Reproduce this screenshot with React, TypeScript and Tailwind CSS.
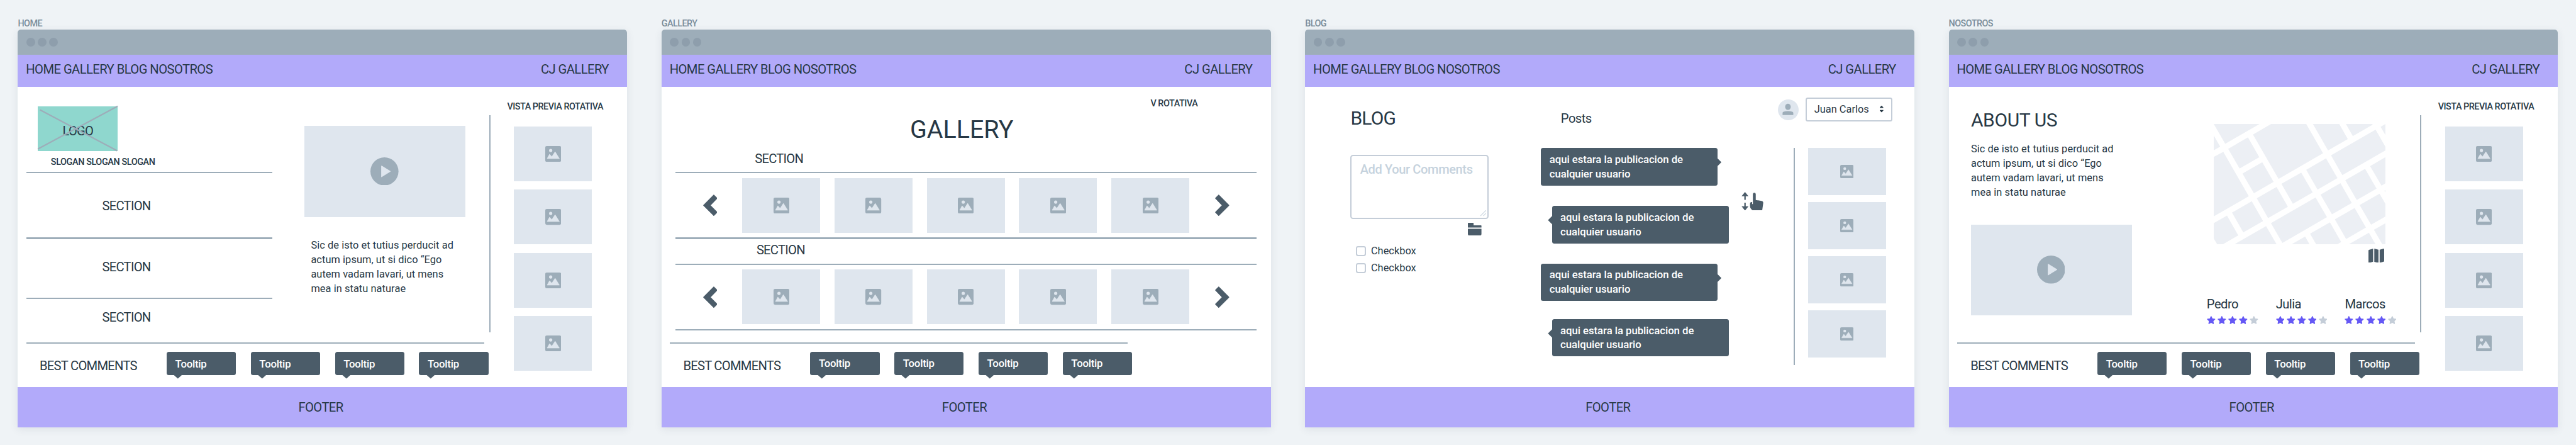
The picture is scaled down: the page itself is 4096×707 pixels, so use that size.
import type { ReactNode } from "react";

const BASE = "font-['Roboto',sans-serif] text-[20.2px] leading-[24px] whitespace-nowrap";
const CAPS = `${BASE} tracking-[-0.56px]`;
const WIDE = `${BASE} tracking-[-0.74px]`;
const SMALL = "font-['Roboto',sans-serif] text-[14.4px] leading-[16px] font-medium whitespace-nowrap";
const LEAD = "font-['Roboto',sans-serif] text-[30px] leading-[36px] whitespace-nowrap";

/* ---------- icons ---------- */

function PictureIcon({ className }: { className: string }) {
  return (
    <svg viewBox="0 0 111 111" className={className}>
      <rect width="111" height="111" rx="11" fill="#9dadb9" />
      <circle cx="38" cy="31" r="11.5" fill="#dfe6ee" />
      <path d="M13 88 30 57 46 75 69 40 99 88Z" fill="#dfe6ee" stroke="#dfe6ee" strokeWidth="3" strokeLinejoin="round" />
    </svg>
  );
}

function ChevronIcon({ flip }: { flip?: boolean }) {
  return (
    <svg viewBox="0 0 40 60" className={flip ? "h-[34.3px] w-[22.8px] -scale-x-100" : "h-[34.3px] w-[22.8px]"}>
      <path d="M1.5 30 29.8 1.5 38.5 10.5 19.5 30 38.5 49.5 29.8 58.5Z" fill="#4b5c69" stroke="#4b5c69" strokeWidth="2.4" strokeLinejoin="round" />
    </svg>
  );
}

function FolderIcon() {
  return (
    <svg viewBox="0 0 114 107" className="h-[20.3px] w-[21.6px]" fill="#4b5c69">
      <path d="M0 39V4a4 4 0 0 1 4-4h40a4 4 0 0 1 4 4v17h62a4 4 0 0 1 4 4v14Z" />
      <path d="M0 50h114v43a14 14 0 0 1-14 14H14A14 14 0 0 1 0 93Z" />
    </svg>
  );
}

function SwipeIcon() {
  return (
    <svg viewBox="0 0 183 156" className="h-[29.6px] w-[34.7px]" fill="#4b5c69">
      <path d="M30 0 59 35H36v31H24V35H1ZM30 156 59 120H36V90H24v30H1Z" />
      <path d="M96 18a12 12 0 0 1 24 0v49l50 8q14 3 13 16l-9 65H96Q72 138 72 118V98q0-14 13-14h5v18h6Z" />
    </svg>
  );
}

function MapIcon() {
  return (
    <svg viewBox="0 0 132 120" className="h-[22.7px] w-[25px]" fill="#4b5c69">
      <path d="M4 10 39 0v110L6 120q-6 0-6-4V16q0-4 4-6Z" />
      <path d="M49 0 84 9v111l-35-9Z" />
      <path d="M94 9 127 0q5 0 5 4v101q0 4-4 5l-34 9Z" />
    </svg>
  );
}

function StarIcon({ on }: { on: boolean }) {
  return (
    <svg viewBox="0 0 24 23" className="h-[13.1px] w-[13.7px]">
      <path
        d="M12 1.2 15.2 7.8 22.6 8.8 17.2 14 18.5 21.4 12 17.9 5.5 21.4 6.8 14 1.4 8.8 8.8 7.8Z"
        fill={on ? "#6558f5" : "#c4cdd8"}
        stroke={on ? "#6558f5" : "#c4cdd8"}
        strokeWidth="2"
        strokeLinejoin="round"
      />
    </svg>
  );
}

const BLOCKS = [
  "36,48 420,48 132,214",
  "36,144 90,238 36,268",
  "36,324 116,281 330,654 36,823",
  "157,256 323,160 418,326 253,422",
  "277,463 443,368 538,534 373,629",
  "365,136 517,48 812,48 953,293 580,509",
  "868,48 1089,48 1161,174 995,269",
  "1145,48 1368,48 1368,54 1203,150",
  "1436,72 1476,48 1476,140",
  "1020,311 1394,96 1476,238 1476,270 1115,477",
  "1348,401 1476,326 1476,546 1444,565",
  "812,432 978,336 1074,502 907,598",
  "604,550 770,456 866,622 700,717",
  "1140,519 1306,424 1402,590 1236,685",
  "1467,607 1476,602 1476,622",
  "397,671 563,576 658,742 492,837",
  "932,640 1099,544 1194,710 1028,805",
  "1260,727 1427,632 1476,717 1476,824 1356,892",
  "189,791 355,696 450,862 284,957",
  "36,879 147,816 242,982 114,1056 64,1056 36,1008",
  "516,879 890,664 986,829 612,1045",
  "1052,847 1218,752 1313,916 1147,1013",
  "1380,935 1476,880 1476,1056 1450,1056",
  "211,1056 475,904 563,1056",
  "844,967 1011,872 1105,1037 1075,1056 895,1056",
  "690,1056 803,992 839,1056",
  "1170,1056 1338,960 1393,1056",
];

function StreetMap() {
  return (
    <svg viewBox="36 48 1440 1008" className="h-[191px] w-[272.9px]" fill="#eceff4">
      {BLOCKS.map((b) => (
        <polygon key={b} points={b} />
      ))}
    </svg>
  );
}

/* ---------- shared parts ---------- */

function Rule({ className }: { className: string }) {
  return <div className={`h-[2.3px] shrink-0 bg-[#9dadb9] ${className}`} />;
}

function Screen({ name, children }: { name: string; children: ReactNode }) {
  return (
    <section className="w-[968.8px] shrink-0">
      <div className={`h-[16.5px] tracking-[-0.55px] text-[#7b8d9a] ${SMALL}`}>{name}</div>
      <div className="overflow-hidden rounded-t-[5px] bg-white shadow-[0_3px_14px_rgba(40,60,80,0.09)]">
        <div className="flex h-[40.9px] items-center gap-[4.5px] bg-[#9dadb9] pl-[13.6px]">
          <i className="size-[13.7px] rounded-full bg-[#8e9eac]" />
          <i className="size-[13.7px] rounded-full bg-[#8e9eac]" />
          <i className="size-[13.7px] rounded-full bg-[#8e9eac]" />
        </div>
        <nav className={`flex h-[50.1px] justify-between bg-[#b2aafa] pt-[10.8px] pr-[29.3px] pl-[12.9px] ${CAPS}`}>
          <span>HOME GALLERY BLOG NOSOTROS</span>
          <span>CJ GALLERY</span>
        </nav>
        <main className="h-[477.6px]">{children}</main>
        <footer className={`flex h-[63.7px] items-center justify-center bg-[#b2aafa] pr-[5.5px] ${CAPS}`}>FOOTER</footer>
      </div>
    </section>
  );
}

function Tooltip() {
  return (
    <div className="relative flex h-[36.5px] w-[110.2px] items-center rounded-[3.5px] bg-[#4b5c69] pl-[13.6px] font-['Roboto',sans-serif] text-[16.8px] leading-[20px] font-medium tracking-[-0.25px] text-white">
      Tooltip
      <svg viewBox="0 0 24 11" className="absolute top-full left-[11.3px] -mt-px h-[7px] w-[13.6px]" fill="#4b5c69">
        <path d="M0 0h24L12 11Z" />
      </svg>
    </div>
  );
}

function BestComments() {
  return (
    <div>
      <Rule className="ml-[13.6px] w-[727.9px]" />
      <div className="flex pl-[34.6px]">
        <div className={`w-[202px] pt-[22.7px] ${WIDE}`}>BEST COMMENTS</div>
        <div className="flex gap-[23.6px] pt-[13.4px]">
          <Tooltip />
          <Tooltip />
          <Tooltip />
          <Tooltip />
        </div>
      </div>
    </div>
  );
}

function Thumb({ small }: { small?: boolean }) {
  return (
    <div className={`flex w-[124px] shrink-0 items-center justify-center bg-[#dfe6ee] ${small ? "h-[74.5px]" : "h-[87px]"}`}>
      <PictureIcon className={small ? "size-[21.2px]" : "size-[25.2px]"} />
    </div>
  );
}

function Preview() {
  return (
    <>
      <div className="mt-[45.5px] h-[344.6px] w-[2.3px] bg-[#9dadb9]" />
      <aside className="pl-[26.3px]">
        <div className={`pt-[24.5px] tracking-[-0.49px] ${SMALL}`}>VISTA PREVIA ROTATIVA</div>
        <div className="flex flex-col gap-[13.3px] pt-[23.1px] pl-[10.9px]">
          <Thumb />
          <Thumb />
          <Thumb />
          <Thumb />
        </div>
      </aside>
    </>
  );
}

function Video() {
  return (
    <div className="flex h-[144.2px] w-[255.8px] items-center justify-center bg-[#dfe6ee] pr-[2px] pb-[1.5px]">
      <svg viewBox="-39 -39 78 78" className="size-[44.6px]">
        <circle r="39" fill="#9dadb9" />
        <path d="M-8 -15 16 0 -8 15Z" fill="#dfe6ee" stroke="#dfe6ee" strokeWidth="2" strokeLinejoin="round" />
      </svg>
    </div>
  );
}

function Lorem() {
  return (
    <p className="font-['Roboto',sans-serif] text-[16.4px] leading-[22.85px] tracking-[0.06px] whitespace-nowrap">
      Sic de isto et tutius perducit ad
      <br />
      actum ipsum, ut si dico “Ego
      <br />
      autem vadam lavari, ut mens
      <br />
      mea in statu naturae
    </p>
  );
}

/* ---------- screens ---------- */

function Home() {
  return (
    <div className="flex">
      <div className="w-[749.5px]">
        <div className="flex h-[406px]">
          <div className="w-[404.8px] pl-[13.6px]">
            <div className="h-[135.3px] pt-[31.8px] pl-[18.2px]">
              <div className="relative flex h-[70.3px] w-[127.3px] items-center justify-center bg-[#8fd7ce] pt-[6.4px]">
                <span className={WIDE}>LOGO</span>
                <svg viewBox="0 0 224 124" className="absolute inset-0 size-full overflow-visible" stroke="#9dadb9" strokeWidth="4">
                  <path d="M6 9.7 222.5 124.5M0 119.3 223.7-.5" />
                </svg>
              </div>
              <div className={`pt-[10.2px] pl-[20.7px] tracking-[-0.4px] ${SMALL}`}>SLOGAN SLOGAN SLOGAN</div>
            </div>
            <Rule className="w-full" />
            <div className={`h-[102.3px] pt-[40.3px] pl-[120.5px] ${WIDE}`}>SECTION</div>
            <Rule className="w-full" />
            <div className={`h-[93.3px] pt-[32.2px] pl-[120.5px] ${WIDE}`}>SECTION</div>
            <Rule className="w-full" />
            <div className={`pt-[16.9px] pl-[120.5px] ${WIDE}`}>SECTION</div>
          </div>
          <div className="pt-[62.9px] pl-[51.2px]">
            <Video />
            <div className="pt-[34.4px] pl-[10px]">
              <Lorem />
            </div>
          </div>
        </div>
        <BestComments />
      </div>
      <Preview />
    </div>
  );
}

function Carousel() {
  return (
    <div className="ml-[22.7px] w-[923.2px]">
      <Rule className="w-full" />
      <div className="flex h-[102.3px] items-center pl-[43.1px]">
        <ChevronIcon />
        <div className="flex gap-[22.7px] pr-[40.6px] pl-[40px]">
          <Thumb />
          <Thumb />
          <Thumb />
          <Thumb />
          <Thumb />
        </div>
        <ChevronIcon flip />
      </div>
      <Rule className="w-full" />
    </div>
  );
}

function Gallery() {
  return (
    <div>
      <div className="flex h-[102.6px]">
        <h1 className="w-[777.6px] pt-[44.1px] pl-[395.2px] font-['Roboto',sans-serif] text-[39.4px] leading-[48px]">GALLERY</h1>
        <div className={`pt-[19.9px] tracking-[-0.45px] ${SMALL}`}>V ROTATIVA</div>
      </div>
      <div className={`h-[32.7px] pl-[148.4px] ${WIDE}`}>SECTION</div>
      <Carousel />
      <div className={`h-[38.8px] pt-[5.1px] pl-[151.1px] ${WIDE}`}>SECTION</div>
      <Carousel />
      <div className="pt-[18.1px]">
        <BestComments />
      </div>
    </div>
  );
}

function Post({ side }: { side: "left" | "right" }) {
  return (
    <div
      className={`relative h-[59.1px] w-[281px] rounded-[3.5px] bg-[#4b5c69] pt-[6.8px] pl-[13.4px] font-['Roboto',sans-serif] text-[16.8px] leading-[22.7px] font-medium tracking-[-0.06px] whitespace-nowrap text-white ${side === "left" ? "ml-[17.3px]" : ""}`}
    >
      aqui estara la publicacion de
      <br />
      cualquier usuario
      <svg
        viewBox="0 0 12 24"
        className={`absolute top-[16px] h-[13.6px] w-[7.5px] ${side === "left" ? "right-full -mr-px -scale-x-100" : "left-full -ml-px"}`}
        fill="#4b5c69"
      >
        <path d="M0 0v24L12 12Z" />
      </svg>
    </div>
  );
}

function Check() {
  return (
    <label className="flex items-center gap-[8.2px] font-['Roboto',sans-serif] text-[16.4px] leading-[15.9px]">
      <span className="size-[15.9px] rounded-[3.4px] border-[2.3px] border-[#c4cdd8]" />
      Checkbox
    </label>
  );
}

function Blog() {
  return (
    <div className="flex">
      <div className="w-[375.2px] pl-[71.6px]">
        <h1 className={`pt-[32.7px] pl-[0.8px] tracking-[-0.9px] ${LEAD}`}>BLOG</h1>
        <div className="relative mt-[39.3px] h-[102.3px] w-[220.6px] rounded-[4.5px] border-[2.3px] border-[#c4cdd8] pt-[9.4px] pl-[13.9px]">
          <span className="block font-['Roboto',sans-serif] text-[20px] leading-[24px] font-medium tracking-[-0.35px] whitespace-nowrap text-[#c5d2dd]">
            Add Your Comments
          </span>
          <svg viewBox="0 0 16 16" className="absolute right-[2.3px] bottom-[2.3px] size-[9.1px]" stroke="#c5d2dd" strokeWidth="1.8">
            <path d="M0 16 16 0M8 16l8-8" />
          </svg>
        </div>
        <div className="pt-[6.3px] pl-[187.7px]">
          <FolderIcon />
        </div>
        <div className="flex flex-col gap-[11.4px] pt-[16.7px] pl-[9.1px]">
          <Check />
          <Check />
        </div>
      </div>
      <div className="w-[318.5px]">
        <div className={`pt-[38.9px] pl-[31.5px] ${CAPS}`}>Posts</div>
        <div className="flex flex-col pt-[35px]">
          <Post side="right" />
          <div className="h-[32.9px]" />
          <Post side="left" />
          <div className="h-[32px]" />
          <Post side="right" />
          <div className="h-[29.3px]" />
          <Post side="left" />
        </div>
      </div>
      <div className="pt-[167.2px]">
        <SwipeIcon />
      </div>
      <div className="pt-[17.1px] pl-[23.3px]">
        <div className="flex items-center gap-[11.3px]">
          <svg viewBox="366 54 174 174" className="size-[33px]">
            <circle cx="453" cy="141" r="87" fill="#dfe6ee" />
            <ellipse cx="450" cy="116" rx="23.5" ry="26" fill="#9dadb9" />
            <path d="M405 185V168q0-8 8-11 37-12 74 0 8 3 8 11v17Z" fill="#9dadb9" />
          </svg>
          <div className="flex h-[38.7px] w-[137.6px] items-center justify-between rounded-[3.5px] border-[2.3px] border-[#c4cdd8] pr-[11.9px] pb-px pl-[11.6px] font-['Roboto',sans-serif] text-[16.4px] leading-[20px] whitespace-nowrap">
            Juan Carlos
            <svg viewBox="0 0 30 54" className="h-[10.3px] w-[5.7px]" fill="#273845">
              <path d="M0 18v-4L12 1q3-2 6 0l12 13v4ZM0 36v4l12 13q3 2 6 0l12-13v-4Z" />
            </svg>
          </div>
        </div>
        <div className="flex pt-[42.1px] pl-[25px]">
          <div className="h-[344.6px] w-[2.3px] bg-[#9dadb9]" />
          <div className="flex flex-col gap-[11.4px] pl-[20.4px]">
            <Thumb small />
            <Thumb small />
            <Thumb small />
            <Thumb small />
          </div>
        </div>
      </div>
    </div>
  );
}

function Person({ name }: { name: string }) {
  return (
    <div className="w-[109.8px]">
      <div className={CAPS}>{name}</div>
      <div className="flex gap-[3.35px] pt-[7.1px]">
        {[1, 2, 3, 4, 5].map((n) => (
          <StarIcon key={n} on={n < 5} />
        ))}
      </div>
    </div>
  );
}

function Nosotros() {
  return (
    <div className="flex">
      <div className="w-[749.5px]">
        <div className="flex h-[406px]">
          <div className="w-[410.3px] pl-[35.4px]">
            <h1 className={`pt-[35.2px] tracking-[-0.4px] ${LEAD}`}>ABOUT US</h1>
            <div className="pt-[17.6px] pb-[39.5px]">
              <Lorem />
            </div>
            <Video />
          </div>
          <div className="pt-[59.1px]">
            <div className="pl-[11.6px]">
              <StreetMap />
            </div>
            <div className="pt-[6.9px] pl-[257.2px]">
              <MapIcon />
            </div>
            <div className="flex pt-[53.8px]">
              <Person name="Pedro" />
              <Person name="Julia" />
              <Person name="Marcos" />
            </div>
          </div>
        </div>
        <BestComments />
      </div>
      <Preview />
    </div>
  );
}

export default function App() {
  return (
    <div className="flex h-[707px] w-[4096px] gap-[54.6px] overflow-hidden bg-[#eff3f6] pt-[30.1px] pl-[28.4px] text-[#273845] [&_svg]:block">
      <Screen name="HOME">
        <Home />
      </Screen>
      <Screen name="GALLERY">
        <Gallery />
      </Screen>
      <Screen name="BLOG">
        <Blog />
      </Screen>
      <Screen name="NOSOTROS">
        <Nosotros />
      </Screen>
    </div>
  );
}
